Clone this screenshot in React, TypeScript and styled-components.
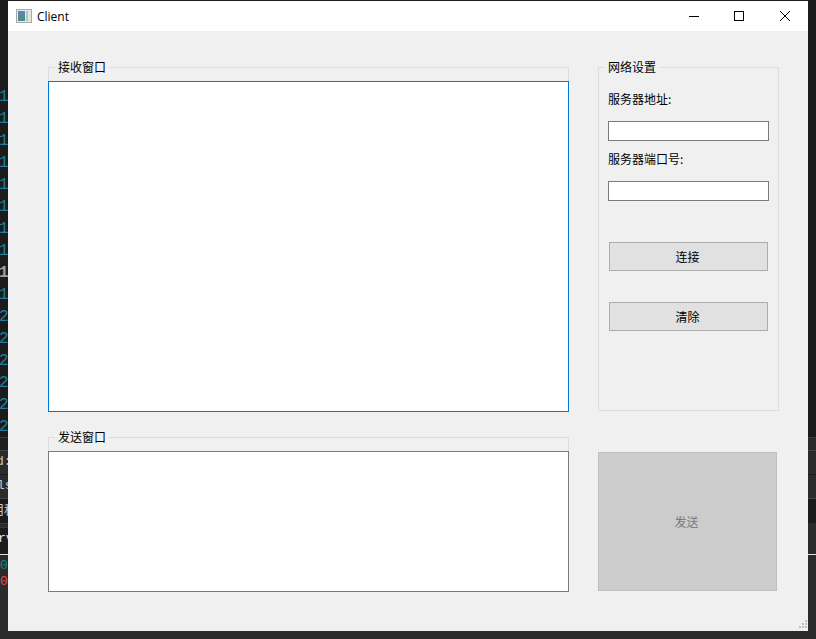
import React from "react";
import styled, { createGlobalStyle } from "styled-components";

const Global = createGlobalStyle`
  html, body { margin: 0; padding: 0; background: #2b2b2b; }
  body { font-family: "Noto Sans CJK SC", "Liberation Sans", sans-serif; }
`;

const Page = styled.div`
  display: grid;
  grid-template-columns: 8px 800px 8px;
  grid-template-rows: 1px 630px 8px;
  width: 816px;
  height: 639px;
  overflow: hidden;
  background: #2b2b2b;
`;
const TopEdge = styled.div`
  grid-column: 1 / 4;
  background: #1c1c1c;
`;
const BottomEdge = styled.div`
  grid-column: 1 / 4;
  background: #2b2b2b;
`;
const Strip = styled.div`
  display: flex;
  flex-direction: column;
  overflow: hidden;
`;
const Band = styled.div<{ $h: number; $bg?: string; $line?: string; $pad?: number }>`
  flex: none;
  box-sizing: border-box;
  height: ${(p) => p.$h}px;
  background: ${(p) => p.$bg ?? "#2b2b2b"};
  border-top: ${(p) => (p.$line ? `1px solid ${p.$line}` : "none")};
  padding-top: ${(p) => p.$pad ?? 0}px;
  overflow: hidden;
`;
const LineNo = styled.div<{ $active?: boolean }>`
  height: 22px;
  line-height: 22px;
  font-family: "Liberation Mono", monospace;
  font-size: 16px;
  font-weight: ${(p) => (p.$active ? 700 : 400)};
  color: ${(p) => (p.$active ? "#a0a0a0" : "#1f7f9f")};
  white-space: nowrap;
  text-indent: -1px;
`;
const Frag = styled.div<{ $color?: string; $indent?: number; $h?: number }>`
  height: ${(p) => p.$h ?? 22}px;
  line-height: ${(p) => p.$h ?? 22}px;
  font-family: "Liberation Mono", "Noto Sans CJK SC", monospace;
  font-size: 13px;
  color: ${(p) => p.$color ?? "#c8c8c8"};
  white-space: nowrap;
  text-indent: ${(p) => p.$indent ?? 0}px;
`;

const Win = styled.div`
  display: flex;
  flex-direction: column;
  background: #f0f0f0;
  position: relative;
  font-size: 12px;
  color: #000;
`;
const TitleBar = styled.div`
  flex: none;
  display: flex;
  align-items: center;
  height: 30px;
  padding-left: 8px;
  background: #fff;
`;
const AppIcon = styled.svg`
  flex: none;
  width: 16px;
  height: 16px;
  margin-right: 5px;
`;
const TitleText = styled.span`
  font-family: "Open Sans", "Liberation Sans", sans-serif;
  font-size: 12px;
  flex: 1;
`;
const WinBtn = styled.div`
  width: 46px;
  height: 30px;
  display: flex;
  align-items: flex-start;
  justify-content: center;
  padding-top: 9px;
  box-sizing: border-box;
`;
const Glyph = styled.svg`
  width: 12px;
  height: 12px;
  display: block;
`;

const Content = styled.div`
  display: grid;
  grid-template-columns: 521px 181px;
  grid-template-rows: 345px 155px;
  column-gap: 29px;
  row-gap: 25px;
  padding: 36px 0 0 40px;
`;
const Group = styled.div`
  position: relative;
  box-sizing: border-box;
  border: 1px solid #dcdcdc;
  display: flex;
  flex-direction: column;
`;
const EditGroup = styled(Group)`
  padding-top: 13px;
  border-bottom: none;
`;
const Legend = styled.span`
  position: absolute;
  top: -9px;
  left: 6px;
  padding: 0 3px;
  height: 16px;
  line-height: 16px;
  background: #f0f0f0;
`;
const TextEdit = styled.div<{ $focus?: boolean }>`
  flex: 1;
  margin: 0 -1px;
  background: #fff;
  border: 1px solid ${(p) => (p.$focus ? "#0078d7" : "#7a7a7a")};
`;
const Settings = styled(Group)`
  height: 344px;
  padding: 23px 9px 0;
`;
const FieldLabel = styled.label`
  height: 16px;
  line-height: 16px;
  margin-bottom: 14px;
`;
const Input = styled.div`
  box-sizing: border-box;
  height: 20px;
  margin-bottom: 10px;
  background: #fff;
  border: 1px solid #7a7a7a;
`;
const Action = styled.button<{ $gap: number }>`
  box-sizing: border-box;
  flex: none;
  height: 29px;
  margin: ${(p) => p.$gap}px 1px 0;
  padding: 0 2px 0 0;
  background: #e1e1e1;
  border: 1px solid #adadad;
  font: inherit;
  color: #000;
`;
const SendCell = styled.div`
  padding-top: 15px;
`;
const SendButton = styled.button`
  box-sizing: border-box;
  display: block;
  width: 179px;
  height: 139px;
  padding: 0 2px 0 0;
  background: #cccccc;
  border: 1px solid #bfbfbf;
  font: inherit;
  color: #787878;
`;
const Grip = styled.svg`
  position: absolute;
  right: 0;
  bottom: 0;
  width: 12px;
  height: 12px;
`;

const nums: [string, boolean][] = [
  ...Array.from({ length: 8 }, () => ["1", false] as [string, boolean]),
  ["1", true],
  ["1", false],
  ...Array.from({ length: 6 }, () => ["2", false] as [string, boolean]),
];

function LeftStrip() {
  return (
    <Strip>
      <Band $h={436} $bg="#1b1b1b" $pad={85}>
        {nums.map(([n, a], i) => (
          <LineNo key={i} $active={a}>{n}</LineNo>
        ))}
      </Band>
      <Band $h={13} $bg="#1e1e1e" $line="#3a3a3a" />
      <Band $h={24} $bg="#2b2b2b" $line="#454545"><Frag $indent={-4} $h={22}>d:</Frag></Band>
      <Band $h={24} $bg="#2b2b2b" $line="#1c1c1c"><Frag $indent={-3} $h={22}>ls</Frag></Band>
      <Band $h={25} $bg="#1c1c1c" $line="#454545"><Frag $indent={-9} $h={24}>用程</Frag></Band>
      <Band $h={4} $bg="#2b2b2b" $line="#3a3a3a" />
      <Band $h={27} $bg="#1c1c1c" $line="#3a3a3a"><Frag $indent={-2} $h={22} $color="#e6e6e6">rv</Frag></Band>
      <Band $h={4} $bg="#2b2b2b" $line="#e0e0e0" />
      <Band $h={73} $bg="#2b2b2b">
        <Frag $h={16} $color="#0e8a84">0</Frag>
        <Frag $h={16} $color="#e0524d">0</Frag>
      </Band>
    </Strip>
  );
}

function RightStrip() {
  return (
    <Strip>
      <Band $h={436} $bg="#1b1b1b" />
      <Band $h={13} $bg="#2a2a2a" $line="#3a3a3a" />
      <Band $h={24} $line="#454545" />
      <Band $h={24} $line="#1c1c1c" />
      <Band $h={25} $bg="#1c1c1c" $line="#454545" />
      <Band $h={31} $line="#2b2b2b" />
      <Band $h={77} $line="#e0e0e0" />
    </Strip>
  );
}

export default function App() {
  const dots = [
    [9, 1], [6, 4], [9, 4], [3, 7], [6, 7], [9, 7],
  ];
  return (
    <Page>
      <Global />
      <TopEdge />
      <LeftStrip />
      <Win>
        <TitleBar>
          <AppIcon viewBox="0 0 16 16">
            <rect x="0.5" y="1.5" width="15" height="13" fill="#e8e8e8" stroke="#a8a8a8" />
            <rect x="2" y="3" width="7" height="10" fill="#4d8f8f" />
            <rect x="2" y="3" width="7" height="4" fill="#5b86b0" />
            <rect x="10" y="3" width="2" height="10" fill="#a9c9c4" />
            <rect x="13" y="3" width="1" height="10" fill="#d4e4e0" />
          </AppIcon>
          <TitleText>Client</TitleText>
          <WinBtn>
            <Glyph viewBox="0 0 12 12"><path d="M2 6.5H12" stroke="#000" fill="none" /></Glyph>
          </WinBtn>
          <WinBtn>
            <Glyph viewBox="0 0 12 12"><rect x="1.5" y="1.5" width="9" height="9" stroke="#000" fill="none" /></Glyph>
          </WinBtn>
          <WinBtn>
            <Glyph viewBox="0 0 12 12"><path d="M1 1L11 11M11 1L1 11" stroke="#000" fill="none" /></Glyph>
          </WinBtn>
        </TitleBar>
        <Content>
          <EditGroup>
            <Legend>接收窗口</Legend>
            <TextEdit $focus />
          </EditGroup>
          <Settings>
            <Legend>网络设置</Legend>
            <FieldLabel>服务器地址:</FieldLabel>
            <Input />
            <FieldLabel>服务器端口号:</FieldLabel>
            <Input />
            <Action $gap={31}>连接</Action>
            <Action $gap={31}>清除</Action>
          </Settings>
          <EditGroup>
            <Legend>发送窗口</Legend>
            <TextEdit />
          </EditGroup>
          <SendCell>
            <SendButton>发送</SendButton>
          </SendCell>
        </Content>
        <Grip viewBox="0 0 12 12">
          {dots.map(([x, y]) => (
            <rect key={`${x}-${y}`} x={x} y={y} width="2" height="2" fill="#bdbdbd" />
          ))}
        </Grip>
      </Win>
      <RightStrip />
      <BottomEdge />
    </Page>
  );
}
